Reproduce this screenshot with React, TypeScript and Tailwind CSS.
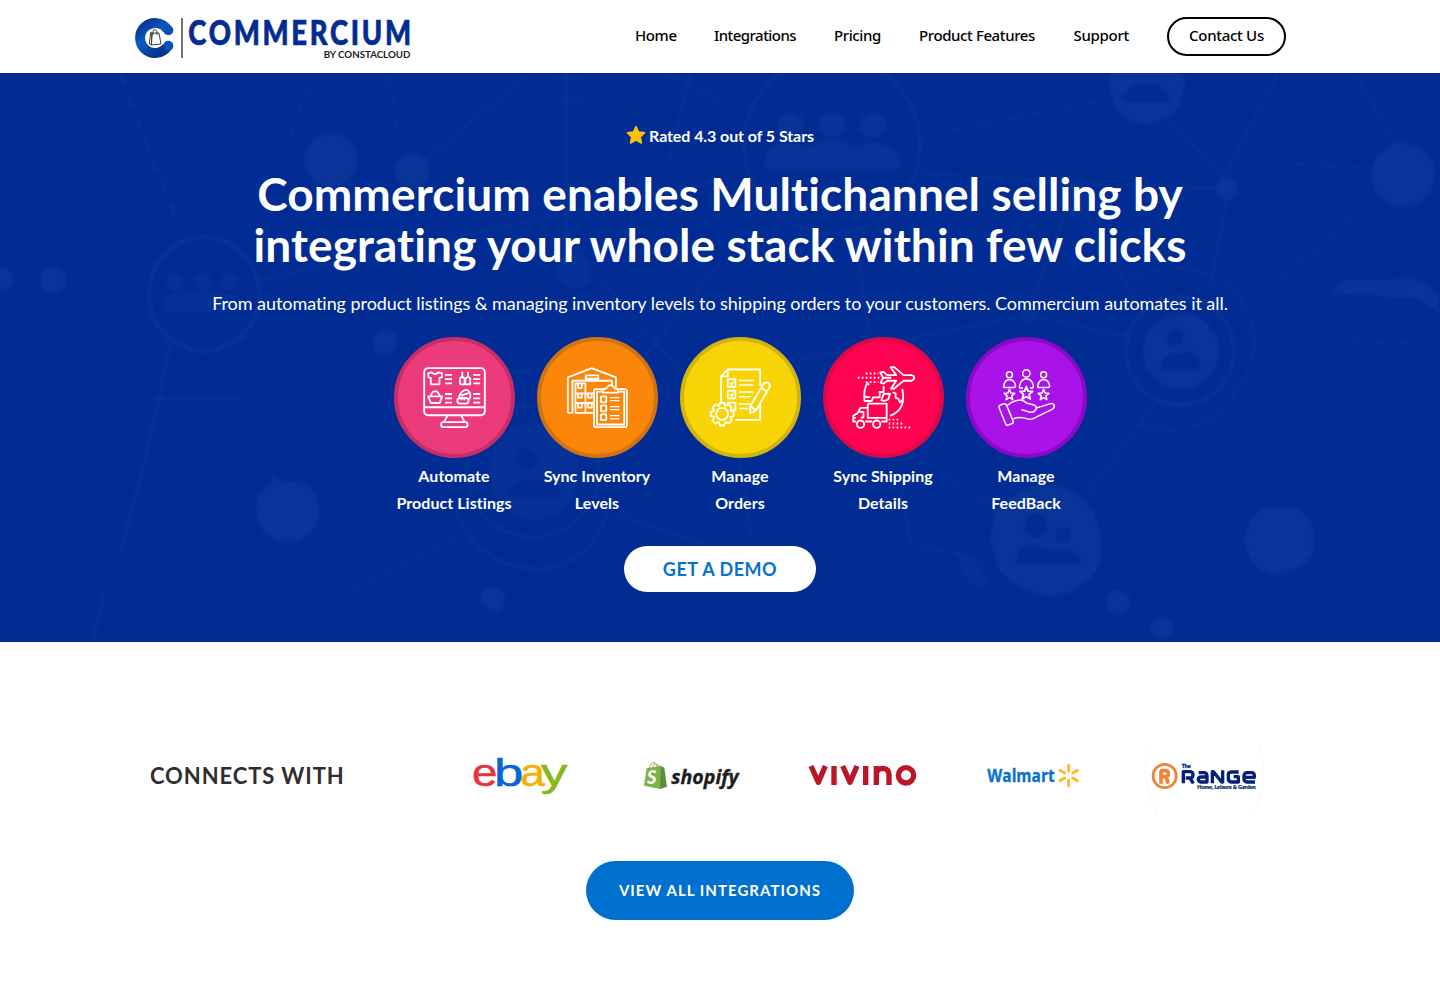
import React from "react";

const NAV = [
  { label: "Home", cls: "w-[79px] tracking-[-0.4px]" },
  { label: "Integrations", cls: "w-[120px] tracking-[-0.55px]" },
  { label: "Pricing", cls: "w-[85px] tracking-[-0.4px]" },
  { label: "Product Features", cls: "w-[154.5px] tracking-[-0.4px]" },
  { label: "Support", cls: "w-[93.5px] tracking-[-0.3px]" },
];

function BrandLogo() {
  return (
    <svg viewBox="45 12 837 153" className="h-[51px] w-[279px]" aria-label="Commercium">
      <defs>
        <linearGradient id="brandC" x1="0" y1="0" x2="0.6" y2="1">
          <stop offset="0" stopColor="#0b2f8f" />
          <stop offset="0.5" stopColor="#0a5cc4" />
          <stop offset="1" stopColor="#06358f" />
        </linearGradient>
      </defs>
      <path d="M142 73 A45 45 0 1 0 142 125" fill="none" stroke="url(#brandC)" strokeWidth="30" />
      <circle cx="145" cy="76" r="15" fill="#0a4fb4" />
      <circle cx="145" cy="122" r="15" fill="#0a4fb4" />
      <path d="M92 82 L88 117 L94 120 L96 84 Z M96 84 L117 84 L123 117 L94 120 Z M99 90 V80 Q100 74 105 74 Q110 75 111 81 V90" fill="#fff" fillOpacity="0.9" stroke="#3d3d3d" strokeWidth="3" strokeLinejoin="round" />
      <path d="M186 39 V159" stroke="#555" strokeWidth="5" />
      <text x="0" y="0" textLength="820" lengthAdjust="spacing" fontFamily="Lato" fontWeight="900" fontSize="101" fill="#022c92" stroke="#022c92" strokeWidth="2" transform="translate(205 120) scale(0.815 1)">COMMERCIUM</text>
      <text x="611" y="158" textLength="260" lengthAdjust="spacingAndGlyphs" fontFamily="Lato" fontWeight="700" fontSize="27" fill="#222">BY CONSTACLOUD</text>
    </svg>
  );
}

function HeroBackdrop() {
  return (
    <svg viewBox="0 0 1440 569" className="absolute inset-0 h-full w-full" aria-hidden="true">
      <defs>
        <filter id="soft" x="-5%" y="-5%" width="110%" height="110%">
          <feGaussianBlur stdDeviation="1.8" />
        </filter>
      </defs>
      <g filter="url(#soft)">
        <g fill="#fff" fillOpacity="0.04">
          <circle cx="331" cy="87" r="27" />
          <circle cx="412" cy="98" r="18" />
          <circle cx="385" cy="269" r="12" />
          <path d="M271 400 L284 409 Q318 405 319 436 Q317 469 288 469 Q257 467 256 436 Q256 418 272 411 Z" />
          <circle cx="493" cy="526" r="12" />
          <circle cx="53" cy="207" r="13" />
          <circle cx="1" cy="206" r="12" />
          <g fillOpacity="0.025">
            <circle cx="175" cy="209" r="9" />
            <circle cx="203" cy="209" r="9" />
            <circle cx="229" cy="209" r="9" />
            <path d="M163 239 V228 Q171 217 186 222 Q200 216 214 222 Q232 216 243 228 V239 Z" />
            <circle cx="574" cy="198" r="18" />
            <path fillRule="evenodd" d="M489 398 a45 49 0 1 0 90 0 a45 49 0 1 0 -90 0 Z M517 386 a10 11 0 1 0 20 0 a10 11 0 1 0 -20 0 Z M506 424 q8 -22 28 -17 q24 -4 26 17 Z" />
          </g>
          <g fillOpacity="0.035">
            <circle cx="791" cy="52" r="13" />
            <circle cx="832" cy="52" r="13" />
            <circle cx="873" cy="52" r="13" />
            <path d="M764 96 Q764 68 790 70 L808 74 Q832 60 855 74 Q898 62 902 96 Z" />
          </g>
          <path fillRule="evenodd" d="M1109 5 Q1110 50 1147 51 Q1184 48 1185 5 L1180 0 H1112 Z M1124 29 Q1124 11 1142 12 Q1167 8 1170 29 Z" />
          <circle cx="1403" cy="102" r="32" />
          <circle cx="1227" cy="116" r="11" />
          <circle cx="1076" cy="128" r="17" fillOpacity="0.02" />
          <circle cx="1030" cy="242" r="9" fillOpacity="0.02" />
          <path fillRule="evenodd" d="M1143 278 a38 38 0 1 0 76 0 a38 38 0 1 0 -76 0 Z M1167 264 a8 9 0 1 0 16 0 a8 9 0 1 0 -16 0 Z M1159 296 q6 -18 22 -15 q16 -8 20 15 Z" />
          <path fillRule="evenodd" d="M990 468 L995 438 Q1020 412 1046 412 Q1075 412 1092 436 L1101 458 V488 Q1085 523 1046 523 Q1012 516 998 495 Z M1025 453 a11 12 0 1 0 22 0 a11 12 0 1 0 -22 0 Z M1056 455 h14 v14 h-14 Z M1015 491 Q1017 470 1035 472 L1056 478 Q1077 472 1081 491 Z" />
          <path d="M1252 445 L1262 434 H1294 Q1308 440 1313 455 L1314 478 Q1308 490 1298 496 L1276 503 Q1262 501 1252 488 L1243 468 Z" />
          <circle cx="1118" cy="529" r="12" />
          <circle cx="1162" cy="555" r="12" />
          <path d="M1331 220 Q1340 204 1360 207 L1416 206 Q1440 212 1440 240 L1420 226 Z" />
          <path d="M955 476 Q984 490 988 512 Q975 520 962 500 Z" fillOpacity="0.025" />
        </g>
        <g fill="none" stroke="#fff" strokeOpacity="0.035" strokeWidth="4">
          <ellipse cx="204" cy="221" rx="55" ry="57" />
          <circle cx="533" cy="398" r="66" strokeOpacity="0.025" />
          <path d="M456 440 Q480 495 540 496 Q600 490 612 420" strokeOpacity="0.025" />
          <path d="M448 350 Q480 298 533 298" strokeDasharray="30 8" strokeOpacity="0.025" />
          <circle cx="832" cy="72" r="88" strokeOpacity="0.025" />
          <circle cx="1180" cy="278" r="54" />
          <path d="M1128 208 Q1190 175 1240 225 Q1270 270 1236 320 Q1200 370 1140 352" strokeDasharray="40 9" strokeWidth="3" strokeOpacity="0.025" />
        </g>
        <g fill="none" stroke="#fff" strokeOpacity="0.025" strokeWidth="3">
          <path d="M120 0 L150 80 L178 150" strokeDasharray="14 9" strokeWidth="5" />
          <path d="M310 10 L284 80" strokeDasharray="14 9" />
          <path d="M388 0 L400 70" strokeDasharray="14 9" />
          <path d="M424 88 L530 0" />
          <path d="M566 0 V190" strokeWidth="5" />
          <path d="M550 5 h34 M555 28 h30" />
          <path d="M150 325 H240" strokeWidth="5" strokeOpacity="0.02" />
          <path d="M170 270 L160 320 L142 400 L120 480 M104 520 L92 569" strokeWidth="4" />
          <path d="M260 207 L450 165 L720 108" />
          <path d="M455 465 L345 520" />
          <path d="M600 205 L700 320 M720 190 L640 290" />
          <path d="M615 440 L715 475" />
          <path d="M665 0 L720 28 M690 0 L668 90" />
          <path d="M920 100 L1076 110 L1227 116" />
          <path d="M855 160 L870 265" />
          <path d="M780 290 L1030 242 L1130 265" />
          <path d="M1030 232 L1066 140 M1086 142 L1140 235" />
          <path d="M1170 45 L1223 106 L1278 0 M1227 126 L1210 215" />
          <path d="M1372 130 L1270 215" strokeDasharray="14 8" />
          <path d="M1355 0 L1398 76" />
          <path d="M1290 90 L1376 96" strokeDasharray="20 8" />
          <path d="M950 58 L1100 28" strokeDasharray="18 10" />
          <path d="M1160 325 L1085 425" />
          <path d="M905 375 L990 430" strokeDasharray="30 10" />
          <path d="M735 360 L752 470 M900 400 L910 470 L990 490" />
          <path d="M1350 268 L1420 270" strokeDasharray="16 8" />
        </g>
      </g>
    </svg>
  );
}

function ListingsIcon() {
  return (
    <g>
      <rect x="117" y="114" width="183" height="142" rx="12" />
      <path d="M117 232 H300 M187 257 L177 276 M229 257 L239 276" />
      <rect x="168" y="277" width="80" height="15" rx="7" />
      <path d="M129 130 L140 127 Q150 136 160 127 L171 130 L170 142 L163 143 V163 H137 V143 L130 142 Z" />
      <path d="M180 134 H201 M180 147 H201 M180 160 H201 M265 134 H286 M265 147 H286 M265 160 H286 M180 192 H201 M180 205 H201 M180 218 H201 M265 192 H286 M265 205 H286 M265 218 H286" />
      <path d="M225 163 V145 L232 139 V125 M239 163 V145 L232 139 M225 163 H256 V145 L249 139 V125 M242 145 L249 139 M241 163 V143" />
      <path d="M129 199 H171 L164 219 H137 Z M137 198 Q140 184 150 183 Q160 184 164 198" />
      <path d="M222 203 Q226 182 246 179 Q258 185 256 203 Q252 211 247 206 M228 197 L251 189" />
      <rect x="217" y="204" width="34" height="17" rx="8.500" />
      <path d="M229 205 v6 M238 205 v6" />
    </g>
  );
}

function InventoryIcon() {
  return (
    <g>
      <path d="M548 249 V142 L620 114 L693 142 V172 M562 249 H548 M562 249 V152 H681 V170 M602 136 H640 V146 H602 Z" />
      <path d="M571 158 V249 H625 M571 160 H601 V249 M571 190 H626 M571 219 H626" />
      <path d="M579 161 v13 h11 v-13 M579 191 v12 h11 v-12 M609 191 v12 h11 v-12 M579 221 v12 h11 v-12 M609 221 v12 h11 v-12" />
      <rect x="627" y="177" width="99" height="115" rx="6" fill="#fb860a" />
      <path d="M652 185 H636 V284 H718 V185 H700" />
      <path d="M654 188 V178 Q665 176 667 171 Q676 160 687 171 Q689 177 699 178 V188 Z" fill="#fb860a" />
      <rect x="648" y="199" width="16" height="18" rx="2" />
      <rect x="648" y="226" width="16" height="18" rx="2" />
      <rect x="648" y="253" width="16" height="18" rx="2" />
      <path d="M675 203 H704 M675 212 H704 M675 230 H704 M675 239 H704 M675 257 H704 M675 267 H704" strokeWidth="4" />
    </g>
  );
}

function OrdersIcon() {
  return (
    <g>
      <path d="M153 218 V139 L173 118 H271 V168 M271 222 V270 H196 M153 139 H173 V118" />
      <rect x="173" y="147" width="23" height="23" />
      <rect x="173" y="182" width="23" height="23" />
      <path d="M174 229 V218 H196 V240 H188" />
      <path d="M179 158 L184 163 L191 154 M179 193 L184 198 L191 189 M207 151 H251 M207 165 H251 M207 186 H251 M207 200 H242 M207 222 H240 M207 236 H236" strokeWidth="4.500" />
      <path d="M241 229 L280 163 Q288 152 298 160 Q302 167 297 175 L259 241 L241 250 Z M273 173 L292 184 M241 229 L259 241" fill="#f8d406" />
      <path d="M150 219 H163 L166 228 L176 223 L185 232 L181 242 L191 246 V258 L181 262 L185 272 L176 281 L166 277 L162 287 H150 L146 277 L136 281 L127 272 L132 262 L122 258 V246 L132 242 L127 232 L136 223 L146 228 Z" fill="#f8d406" />
      <circle cx="156" cy="252" r="18" />
    </g>
  );
}

function ShippingIcon() {
  return (
    <g>
      <path d="M652 135 H679 L662 111 H673 L701 135 H724 Q733 136 733 143 Q733 150 724 152 H701 L672 176 H663 L679 152 H652 L640 161 L632 158 L639 143 L631 127 L640 125 Z M639 143 H664" />
      <path d="M563 143 H631 M587 130 H625 M587 156 H625" strokeDasharray="5 7" />
      <path d="M592 158 Q579 181 583 213 H605 L609 202 H629 V186 H641 V168 M592 158 L597 165 M584 199 Q594 204 600 200" />
      <path d="M634 210 L641 192 L660 191 L655 208 L642 213 Z M668 187 L677 190 V203 L686 207 L690 217 L700 208 M697 177 Q711 239 660 258" />
      <path d="M593 221 H650 V275 H634 M593 221 V264 H650 M593 234 H571 L562 250 L549 258 V275 H558 M585 275 H607 M572 263 H580 V246 H567 M549 264 H557" />
      <circle cx="571" cy="283" r="11" />
      <circle cx="620" cy="283" r="11" />
      <path d="M656 269 H690 M656 281 H699 M656 293 H724" strokeDasharray="5 7" />
    </g>
  );
}

const STAR = "M0 -16 L4.500 -5 L16 -4 L7 3.500 L10 15 L0 9 L-10 15 L-7 3.500 L-16 -4 L-4.500 -5 Z";

function FeedbackIcon() {
  return (
    <g strokeWidth="4.500">
      <circle cx="178" cy="134" r="9" />
      <circle cx="229" cy="130" r="11" />
      <circle cx="281" cy="134" r="9" />
      <path d="M163 172 Q159 172 161 166 Q164 149 178 148 Q193 149 196 166 Q197 172 192 172 Z" />
      <path d="M266 172 Q262 172 264 166 Q267 149 281 148 Q296 149 299 166 Q300 172 295 172 Z" />
      <path d="M219 174 H210 Q207 173 209 166 Q213 147 229 146 Q246 147 250 166 Q251 173 247 174 H240" />
      <path d={STAR} transform="translate(178 194)" />
      <path d={STAR} transform="translate(229 189) scale(1.200)" />
      <path d={STAR} transform="translate(281 194)" />
      <path d="M146 231 Q146 226 151 225 L163 221 Q167 221 169 225 L189 273 Q191 279 186 281 L174 286 Q168 287 166 281 Z" />
      <path d="M171 227 Q190 210 211 210 Q221 210 229 219 L252 225 Q260 229 259 234 L302 221 Q315 220 313 231 Q312 237 303 240 L248 267 Q235 270 222 264 Q204 260 190 267 M214 239 L240 247 Q257 248 259 234" />
    </g>
  );
}

const FEATURES = [
  { lines: ["Automate", "Product Listings"], circle: "border-[#c82d66] bg-[#ec3b7b]", box: "38 32 341 341", Icon: ListingsIcon },
  { lines: ["Sync Inventory", "Levels"], circle: "border-[#d07412] bg-[#fb860a]", box: "467 32 341 341", Icon: InventoryIcon },
  { lines: ["Manage", "Orders"], circle: "border-[#d2b40a] bg-[#f8d406]", box: "41 32 341 341", Icon: OrdersIcon },
  { lines: ["Sync Shipping", "Details"], circle: "border-[#dc0848] bg-[#ff0352]", box: "470 32 341 341", Icon: ShippingIcon },
  { lines: ["Manage", "FeedBack"], circle: "border-[#8a08c6] bg-[#a913ea]", box: "59 32 341 341", Icon: FeedbackIcon },
];

function EbayLogo() {
  return (
    <svg viewBox="39 0 288 240" className="h-[80px] w-[96px]" aria-label="ebay">
      <g fontFamily="Liberation Sans" fontSize="116" strokeWidth="1.500">
        <text x="36" y="138" textLength="76" lengthAdjust="spacingAndGlyphs" fill="#e5323b" stroke="#e5323b">e</text>
        <text x="102" y="138" textLength="88" lengthAdjust="spacingAndGlyphs" fill="#0964d2" stroke="#0964d2">b</text>
        <text x="181" y="138" textLength="74" lengthAdjust="spacingAndGlyphs" fill="#f5af02" stroke="#f5af02">a</text>
        <text x="242" y="138" textLength="80" lengthAdjust="spacingAndGlyphs" fill="#86b817" stroke="#86b817">y</text>
      </g>
    </svg>
  );
}

function ShopifyLogo() {
  return (
    <svg viewBox="547 0 297 240" className="h-[80px] w-[99px]" aria-label="shopify">
      <path d="M568 84 Q573 67 583 67 Q592 69 593 80 M577 82 Q582 70 589 72 Q596 74 599 80" fill="none" stroke="#95bf47" strokeWidth="3" />
      <path d="M561 85 L602 77 L601 147 L553 137 Z" fill="#7fb24a" />
      <path d="M602 77 L614 83 L622 140 L601 147 Z" fill="#5a8e3a" />
      <text x="562" y="132" fontFamily="Lato" fontWeight="900" fontStyle="italic" fontSize="54" textLength="28" lengthAdjust="spacingAndGlyphs" fill="#fff">S</text>
      <text x="635" y="131" fontFamily="Open Sans" fontWeight="700" fontStyle="italic" fontSize="61" textLength="202" lengthAdjust="spacingAndGlyphs" fill="#1c1c1c" stroke="#1c1c1c" strokeWidth="1">shopify</text>
    </svg>
  );
}

function VivinoLogo() {
  return (
    <svg viewBox="56 0 330 240" className="h-[80px] w-[110px]" aria-label="vivino">
      <g fill="none" stroke="#ba1628" strokeWidth="16" strokeLinejoin="round">
        <path d="M65 78 L87 127 L108 78 M160 78 L182 127 L203 78" />
        <path d="M134 78 V135 M229 78 V135" />
        <path d="M261 135 V78 M261 100 Q265 85 280 85 Q299 86 299 104 V135" />
        <circle cx="350" cy="106" r="23" />
      </g>
    </svg>
  );
}

function WalmartLogo() {
  return (
    <svg viewBox="584 0 291 240" className="h-[80px] w-[97px]" aria-label="Walmart">
      <text x="591" y="126" fontFamily="Open Sans" fontWeight="700" fontSize="54" textLength="202" lengthAdjust="spacingAndGlyphs" fill="#0a72ce" stroke="#0a72ce" strokeWidth="1">Walmart</text>
      <g stroke="#fdbb30" strokeWidth="9" strokeLinecap="round">
        <path d="M835 76 V93 M835 120 V137 M809 91 L823 99 M861 91 L847 99 M809 122 L823 114 M861 122 L847 114" />
      </g>
      <circle cx="869" cy="124" r="1.500" fill="#fdbb30" />
    </svg>
  );
}

function RangeLogo() {
  return (
    <svg viewBox="42 0 363 240" className="h-[80px] w-[121px]" aria-label="The Range">
      <path d="M62 12 Q22 110 85 230 M384 15 Q424 110 366 228" fill="none" stroke="#e0e0e0" strokeWidth="2.500" strokeDasharray="3 7" />
      <circle cx="104" cy="108" r="35" fill="none" stroke="#ee8535" strokeWidth="8" />
      <path d="M93 131 V97 Q93 92 98 92 H107 Q115 93 115 101 Q115 109 107 110 H98 M108 110 L115 131" fill="none" stroke="#ee8535" strokeWidth="11" strokeLinejoin="round" />
      <text x="155" y="84" fontFamily="Lato" fontWeight="900" fontSize="15" textLength="27" lengthAdjust="spacingAndGlyphs" fill="#061f7d" stroke="#061f7d" strokeWidth="0.800">The</text>
      <g fill="none" stroke="#061f7d" strokeWidth="10" strokeLinejoin="round">
        <path d="M160 130 V95 H181 Q189 96 189 104 Q189 113 181 114 H167 M180 114 L190 130" />
        <path d="M206 98 H223 Q231 99 231 108 V126 H212 Q205 125 205 118 Q206 111 213 111 H230" />
        <path d="M247 130 V95 H250 L275 126 H278 V91" />
        <path d="M326 96 H304 Q295 97 295 104 V117 Q296 126 305 126 H325 V110 H311" />
        <path d="M375 126 H352 Q342 125 342 117 V107 Q343 98 352 98 H366 Q373 99 373 107 V112 H344" />
      </g>
      <text x="202" y="146" fontFamily="Lato" fontWeight="900" fontSize="14" textLength="175" lengthAdjust="spacingAndGlyphs" fill="#061f7d" stroke="#061f7d" strokeWidth="0.600">Home, Leisure &amp; Garden</text>
    </svg>
  );
}

export default function App() {
  return (
    <div className="min-h-[988px] w-full bg-white font-['Lato',sans-serif] [font-variant-ligatures:none]">
      <header className="flex h-[73px] items-start pl-[135px]">
        <div className="pt-[9px]">
          <BrandLogo />
        </div>
        <nav className="ml-[221px] flex h-[73px] items-start font-['Noto_Sans',sans-serif] text-[15px] font-medium whitespace-nowrap text-black">
          {NAV.map((item) => (
            <a key={item.label} className={"pt-[23px] leading-[24px] " + item.cls}>
              {item.label}
            </a>
          ))}
          <a className="mt-[17px] flex h-[39px] w-[119px] items-center justify-center rounded-full border-2 border-black pb-[3px] tracking-[-0.3px]">
            Contact Us
          </a>
        </nav>
      </header>

      <section className="relative h-[569px] overflow-hidden bg-[#002c93] text-white">
        <HeroBackdrop />
        <div className="relative flex flex-col items-center pt-[51px]">
          <div className="flex h-6 items-center gap-[3px] text-[16px] font-bold tracking-[-0.08px]">
            <svg viewBox="0 0 20 20" className="-mt-[2px] h-[20px] w-[20px]">
              <path d="M10 1.500 L12.600 7 L18.600 7.800 L14.300 12 L15.400 18 L10 15.200 L4.600 18 L5.700 12 L1.400 7.800 L7.400 7 Z" fill="#ffc107" stroke="#ffc107" strokeWidth="1.500" strokeLinejoin="round" />
            </svg>
            <span>Rated 4.3 out of 5 Stars</span>
          </div>
          <h1 className="mt-[20px] text-center text-[46px] leading-[51px] font-bold tracking-[0.1px] whitespace-nowrap">
            Commercium enables Multichannel selling by
            <br />
            integrating your whole stack within few clicks
          </h1>
          <p className="mt-[20px] text-[18px] leading-[27px] tracking-[-0.055px] whitespace-nowrap">
            From automating product listings &amp; managing inventory levels to shipping orders to your customers. Commercium automates it all.
          </p>
          <div className="mt-[20px] ml-[41px] grid grid-cols-[repeat(5,143px)]">
            {FEATURES.map(({ lines, circle, box, Icon }) => (
              <div key={lines.join(" ")} className="flex flex-col items-start pl-[11px]">
                <div className={"h-[121px] w-[121px] rounded-full border-4 " + circle}>
                  <svg viewBox={box} className="h-full w-full" fill="none" stroke="#fff" strokeWidth="5.500" strokeLinejoin="round">
                    <Icon />
                  </svg>
                </div>
                <div className="mt-[4px] w-[120px] text-center text-[16px] leading-[27px] font-bold tracking-[0.05px] whitespace-nowrap">
                  {lines[0]}
                  <br />
                  {lines[1]}
                </div>
              </div>
            ))}
          </div>
          <button className="mt-[30px] h-[46px] w-[192px] rounded-full bg-white text-[18px] font-bold tracking-[0.5px] text-[#0472cf]">
            GET A DEMO
          </button>
        </div>
      </section>

      <section className="flex flex-col items-center pt-[98px]">
        <div className="flex w-full items-center pl-[150px]">
          <h2 className="w-[285px] pb-[10px] text-[22px] font-bold tracking-[0.9px] whitespace-nowrap text-[#2f2f2f]">CONNECTS WITH</h2>
          <div className="grid grid-cols-[repeat(5,171px)] justify-items-center">
            <EbayLogo />
            <ShopifyLogo />
            <VivinoLogo />
            <WalmartLogo />
            <RangeLogo />
          </div>
        </div>
        <button className="mt-[41px] h-[59px] w-[268px] rounded-full bg-[#0070cf] text-[15px] font-bold tracking-[1.05px] text-white">
          VIEW ALL INTEGRATIONS
        </button>
      </section>
    </div>
  );
}
